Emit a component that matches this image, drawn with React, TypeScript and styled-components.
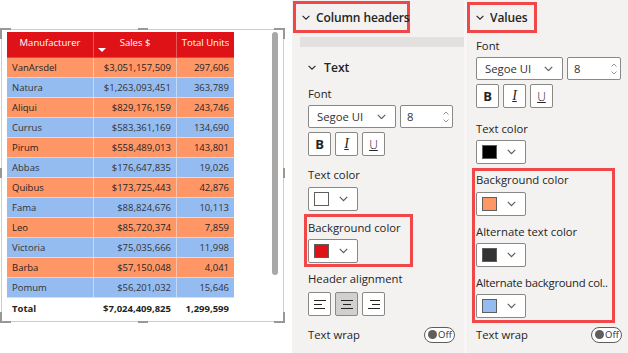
import React from 'react';
import styled, { createGlobalStyle } from 'styled-components';

const GlobalStyle = createGlobalStyle`
    html, body {
        margin: 0;
        padding: 0;
        background: #fff;
    }
    body {
        font-family: 'Open Sans', 'Noto Sans', sans-serif;
        color: #252423;
    }
`;

const ORANGE = '#fe9666';
const BLUE = '#95bcf1';
const RED = '#df1217';
const HILITE = '#f04848';

type Row = [string, string, string];

const rows: Array<Row> = [
    ['VanArsdel', '$3,051,157,509', '297,606'],
    ['Natura', '$1,263,093,451', '363,789'],
    ['Aliqui', '$829,176,159', '243,746'],
    ['Currus', '$583,361,169', '134,690'],
    ['Pirum', '$558,489,013', '143,801'],
    ['Abbas', '$176,647,835', '19,026'],
    ['Quibus', '$173,725,443', '42,876'],
    ['Fama', '$88,824,676', '10,113'],
    ['Leo', '$85,720,374', '7,859'],
    ['Victoria', '$75,035,666', '11,998'],
    ['Barba', '$57,150,048', '4,041'],
    ['Pomum', '$56,201,032', '15,646'],
];

const Page = styled.div`
    display: flex;
    width: 628px;
    height: 353px;
    overflow: hidden;
`;

/* ---------- report canvas ---------- */

const Canvas = styled.div`
    flex: none;
    width: 292px;
    padding: 29px 0 0 1px;
    box-sizing: border-box;
    background: #fff;
`;

const Frame = styled.div`
    position: relative;
    display: flex;
    justify-content: space-between;
    align-items: flex-start;
    width: 283px;
    height: 293px;
    padding: 2px 5px 0 5px;
    box-sizing: border-box;
    border: 1px solid #cfcdcb;
`;

const Corner = styled.div<{ $v: 'top' | 'bottom'; $h: 'left' | 'right' }>`
    position: absolute;
    width: 9px;
    height: 9px;
    ${(p) => p.$v}: -2px;
    ${(p) => p.$h}: -2px;
    border-${(p) => p.$v}: 2px solid #9a9896;
    border-${(p) => p.$h}: 2px solid #9a9896;
`;

const Handle = styled.div<{ $side: 'top' | 'bottom' | 'left' | 'right' }>`
    position: absolute;
    background: #9a9896;
    ${(p) =>
        p.$side === 'top' || p.$side === 'bottom'
            ? `width: 10px; height: 2px; left: 136px; ${p.$side}: -2px;`
            : `width: 2px; height: 10px; top: 138px; ${p.$side}: -2px;`}
`;

const Table = styled.div`
    width: 227px;
    font-size: 9.5px;
`;

const Cols = styled.div`
    display: grid;
    grid-template-columns: 86px 83px 58px;
`;

const HeadRow = styled(Cols)`
    height: 26px;
    background: ${RED};
    border-bottom: 1px solid #3f8f86;
    box-sizing: border-box;
`;

const HeadCell = styled.div`
    position: relative;
    color: #fff;
    text-align: center;
    padding-top: 4px;
    line-height: 13px;
    & + & {
        border-left: 1px solid #e8585a;
    }
`;

const SortArrow = styled.div`
    position: absolute;
    left: 4px;
    bottom: 5px;
    width: 0;
    height: 0;
    border-left: 4px solid transparent;
    border-right: 4px solid transparent;
    border-top: 4px solid #fff;
`;

const BodyRow = styled(Cols)<{ $alt: boolean }>`
    height: 20px;
    box-sizing: border-box;
    background: ${(p) => (p.$alt ? BLUE : ORANGE)};
    color: ${(p) => (p.$alt ? '#333' : '#252423')};
    border-bottom: 1px solid rgba(255, 255, 255, 0.55);
    &:last-of-type {
        border-bottom: 2px solid #20c4c4;
    }
`;

const Cell = styled.div<{ $right?: boolean }>`
    padding: 0 5px;
    line-height: 19px;
    text-align: ${(p) => (p.$right ? 'right' : 'left')};
    white-space: nowrap;
    & + & {
        border-left: 1px solid rgba(255, 255, 255, 0.45);
    }
`;

const TotalRow = styled(Cols)`
    height: 21px;
    font-weight: 700;
    color: #252423;
`;

const TotalCell = styled.div<{ $right?: boolean }>`
    padding: 0 5px;
    line-height: 21px;
    text-align: ${(p) => (p.$right ? 'right' : 'left')};
    white-space: nowrap;
`;

const Scrollbar = styled.div`
    flex: none;
    width: 6px;
    height: 243px;
    border-radius: 3px;
    background: #a9a8a7;
`;

/* ---------- format panes ---------- */

const Pane = styled.div`
    flex: none;
    width: 172px;
    display: flex;
    flex-direction: column;
    background: #f3f2f1;
`;

const RightPane = styled.div`
    flex: 1;
    display: flex;
    flex-direction: column;
    background: #f3f2f1;
    border-left: 3px solid #f8f7f6;
`;

const HeadWrap = styled.div<{ $pt: number; $pl: number }>`
    padding: ${(p) => p.$pt}px 0 0 ${(p) => p.$pl}px;
`;

const SectionHead = styled.div<{ $width: number; $height: number }>`
    display: flex;
    align-items: center;
    gap: 6px;
    width: ${(p) => p.$width}px;
    height: ${(p) => p.$height}px;
    box-sizing: border-box;
    border: 3px solid ${HILITE};
    padding-left: 6px;
    font-size: 12px;
    font-weight: 600;
    letter-spacing: -0.1px;
    white-space: nowrap;
    color: #252423;
    svg {
        flex: none;
    }
`;

const Chevron = ({ size = 8, color = '#252423' }: { size?: number; color?: string }) => (
    <svg width={size} height={size / 2 + 1} viewBox="0 0 8 5" fill="none">
        <path d="M0.6 0.8 L4 4.2 L7.4 0.8" stroke={color} strokeWidth="1.1" />
    </svg>
);

const Band = styled.div`
    height: 10px;
    margin: 4px 0 0 8px;
    background: #e3e1df;
`;

const Card = styled.div`
    display: flex;
    flex-direction: column;
    margin-left: 8px;
    padding-left: 8px;
    background: #f3f2f1;
`;

const SubHead = styled.div`
    display: flex;
    align-items: center;
    gap: 8px;
    height: 20px;
    margin-top: 10px;
    font-size: 12.2px;
    font-weight: 600;
`;

const Label = styled.div<{ $mt?: number; $tight?: boolean }>`
    margin-top: ${(p) => p.$mt ?? 0}px;
    height: 16px;
    line-height: 16px;
    font-size: 11.3px;
    letter-spacing: ${(p) => (p.$tight ? '-0.25px' : '0')};
    white-space: nowrap;
`;

const FieldRow = styled.div<{ $mt?: number }>`
    display: flex;
    gap: 4px;
    margin-top: ${(p) => p.$mt ?? 0}px;
`;

const Box = styled.div<{ $width: number; $height?: number }>`
    display: flex;
    align-items: center;
    width: ${(p) => p.$width}px;
    height: ${(p) => p.$height ?? 23}px;
    box-sizing: border-box;
    border: 1px solid #8a8886;
    border-radius: 2px;
    background: #fff;
    font-size: 11.3px;
    color: #323130;
`;

const DropText = styled.span<{ $pl?: number }>`
    flex: 1;
    padding-left: ${(p) => p.$pl ?? 8}px;
`;

const DropChevron = styled.span`
    display: flex;
    padding-right: 9px;
`;

const Spin = styled.span`
    display: flex;
    flex-direction: column;
    gap: 4px;
    padding-right: 3px;
`;

const ToolButton = styled.div<{ $active?: boolean }>`
    display: flex;
    align-items: center;
    justify-content: center;
    width: 23px;
    height: 24px;
    box-sizing: border-box;
    border: 1px solid #8a8886;
    border-radius: 2px;
    background: ${(p) => (p.$active ? '#d2d0ce' : '#fff')};
    color: #252423;
`;

const BoldGlyph = styled.span`
    font-weight: 700;
    font-size: 13px;
`;

const ItalicGlyph = styled.span`
    font-family: 'Liberation Serif', serif;
    font-style: italic;
    font-size: 14px;
    text-decoration: underline;
    text-decoration-thickness: 1px;
    text-underline-offset: 1px;
`;

const UnderGlyph = styled.span`
    font-size: 12px;
    font-weight: 300;
    text-decoration: underline;
    text-decoration-thickness: 1px;
    text-underline-offset: 1px;
`;

const Swatch = styled.span<{ $color: string }>`
    width: 15px;
    height: 14px;
    margin-left: 5px;
    box-sizing: border-box;
    border: 1px solid #605e5c;
    background: ${(p) => p.$color};
`;

const PickerChevron = styled.span`
    display: flex;
    margin-left: auto;
    margin-right: 9px;
`;

const Highlight = styled.div<{ $width: number; $mt: number; $pt: number; $pb: number }>`
    display: flex;
    flex-direction: column;
    width: ${(p) => p.$width}px;
    margin: ${(p) => p.$mt}px 0 0 -4px;
    padding: ${(p) => p.$pt}px 0 ${(p) => p.$pb}px 1px;
    box-sizing: border-box;
    border: 3px solid ${HILITE};
`;

const WrapRow = styled.div<{ $mt: number; $pr: number }>`
    display: flex;
    align-items: center;
    justify-content: space-between;
    margin-top: ${(p) => p.$mt}px;
    padding-right: ${(p) => p.$pr}px;
    height: 17px;
    font-size: 11.3px;
`;

const Toggle = styled.div`
    display: flex;
    align-items: center;
    gap: 1px;
    width: 31px;
    height: 16px;
    box-sizing: border-box;
    padding-left: 3px;
    border: 1px solid #605e5c;
    border-radius: 8px;
    background: #fff;
    font-size: 9.5px;
    color: #323130;
`;

const Knob = styled.span`
    width: 9px;
    height: 9px;
    border-radius: 50%;
    background: #605e5c;
`;

const ValuesBody = styled.div`
    display: flex;
    flex-direction: column;
    padding-left: 9px;
`;

const AlignIcon = ({ kind }: { kind: 'left' | 'center' | 'right' }) => {
    const mid = kind === 'left' ? 'M0 5.5 H8' : kind === 'center' ? 'M2 5.5 H10' : 'M4 5.5 H12';
    const top = kind === 'right' ? 'M2 1.5 H12' : 'M0 1.5 H12';
    const bot = kind === 'left' ? 'M0 9.5 H11' : 'M0 9.5 H12';
    return (
        <svg width="12" height="11" viewBox="0 0 12 11" fill="none" stroke="#252423" strokeWidth="1">
            <path d={top} />
            <path d={mid} />
            <path d={bot} />
        </svg>
    );
};

const SpinArrow = ({ up }: { up?: boolean }) => (
    <svg width="6" height="4" viewBox="0 0 6 4" fill="none">
        <path d={up ? 'M0.5 3.5 L3 1 L5.5 3.5' : 'M0.5 0.5 L3 3 L5.5 0.5'} stroke="#8a8886" strokeWidth="0.9" />
    </svg>
);

const FontControls = ({ dropW, numW }: { dropW: number; numW: number }) => (
    <>
        <FieldRow $mt={3}>
            <Box $width={dropW}>
                <DropText>Segoe UI</DropText>
                <DropChevron>
                    <Chevron size={9} color="#605e5c" />
                </DropChevron>
            </Box>
            <Box $width={numW}>
                <DropText $pl={6}>8</DropText>
                <Spin>
                    <SpinArrow up />
                    <SpinArrow />
                </Spin>
            </Box>
        </FieldRow>
        <FieldRow $mt={4}>
            <ToolButton>
                <BoldGlyph>B</BoldGlyph>
            </ToolButton>
            <ToolButton>
                <ItalicGlyph>I</ItalicGlyph>
            </ToolButton>
            <ToolButton>
                <UnderGlyph>U</UnderGlyph>
            </ToolButton>
        </FieldRow>
    </>
);

const ColorPicker = ({ color, mt = 3 }: { color: string; mt?: number }) => (
    <FieldRow $mt={mt}>
        <Box $width={50} $height={24}>
            <Swatch $color={color} />
            <PickerChevron>
                <Chevron size={9} color="#605e5c" />
            </PickerChevron>
        </Box>
    </FieldRow>
);

export default function App() {
    return (
        <Page>
            <GlobalStyle />
            <Canvas>
                <Frame>
                    <Corner $v="top" $h="left" />
                    <Corner $v="top" $h="right" />
                    <Corner $v="bottom" $h="left" />
                    <Corner $v="bottom" $h="right" />
                    <Handle $side="top" />
                    <Handle $side="bottom" />
                    <Handle $side="left" />
                    <Handle $side="right" />
                    <Table>
                        <HeadRow>
                            <HeadCell>Manufacturer</HeadCell>
                            <HeadCell>
                                Sales $
                                <SortArrow />
                            </HeadCell>
                            <HeadCell>Total Units</HeadCell>
                        </HeadRow>
                        {rows.map((r, i) => (
                            <BodyRow key={r[0]} $alt={i % 2 === 1}>
                                <Cell>{r[0]}</Cell>
                                <Cell $right>{r[1]}</Cell>
                                <Cell $right>{r[2]}</Cell>
                            </BodyRow>
                        ))}
                        <TotalRow>
                            <TotalCell>Total</TotalCell>
                            <TotalCell $right>$7,024,409,825</TotalCell>
                            <TotalCell $right>1,299,599</TotalCell>
                        </TotalRow>
                    </Table>
                    <Scrollbar />
                </Frame>
            </Canvas>

            <Pane>
                <HeadWrap $pt={1} $pl={1}>
                    <SectionHead $width={117} $height={32}>
                        <Chevron />
                        Column headers
                    </SectionHead>
                </HeadWrap>
                <Band />
                <Card>
                    <SubHead>
                        <Chevron />
                        Text
                    </SubHead>
                    <Label $mt={9}>Font</Label>
                    <FontControls dropW={88} numW={53} />
                    <Label $mt={11}>Text color</Label>
                    <ColorPicker color="#fff" mt={4} />
                    <Highlight $width={109} $mt={3} $pt={3} $pb={1}>
                        <Label>Background color</Label>
                        <ColorPicker color={RED} mt={3} />
                    </Highlight>
                    <Label $mt={4}>Header alignment</Label>
                    <FieldRow $mt={5}>
                        <ToolButton>
                            <AlignIcon kind="left" />
                        </ToolButton>
                        <ToolButton $active>
                            <AlignIcon kind="center" />
                        </ToolButton>
                        <ToolButton>
                            <AlignIcon kind="right" />
                        </ToolButton>
                    </FieldRow>
                    <WrapRow $mt={10} $pr={9}>
                        Text wrap
                        <Toggle>
                            <Knob />
                            Off
                        </Toggle>
                    </WrapRow>
                </Card>
            </Pane>

            <RightPane>
                <HeadWrap $pt={2} $pl={0}>
                    <SectionHead $width={70} $height={31}>
                        <Chevron />
                        Values
                    </SectionHead>
                </HeadWrap>
                <ValuesBody>
                    <Label $mt={5}>Font</Label>
                    <FontControls dropW={87} numW={54} />
                    <Label $mt={13}>Text color</Label>
                    <ColorPicker color="#000" mt={3} />
                    <Highlight $width={143} $mt={4} $pt={1} $pb={2}>
                        <Label>Background color</Label>
                        <ColorPicker color={ORANGE} mt={4} />
                        <Label $mt={8}>Alternate text color</Label>
                        <ColorPicker color="#333" mt={3} />
                        <Label $mt={8} $tight>
                            Alternate background col..
                        </Label>
                        <ColorPicker color={BLUE} mt={3} />
                    </Highlight>
                    <WrapRow $mt={3} $pr={6}>
                        Text wrap
                        <Toggle>
                            <Knob />
                            Off
                        </Toggle>
                    </WrapRow>
                </ValuesBody>
            </RightPane>
        </Page>
    );
}
